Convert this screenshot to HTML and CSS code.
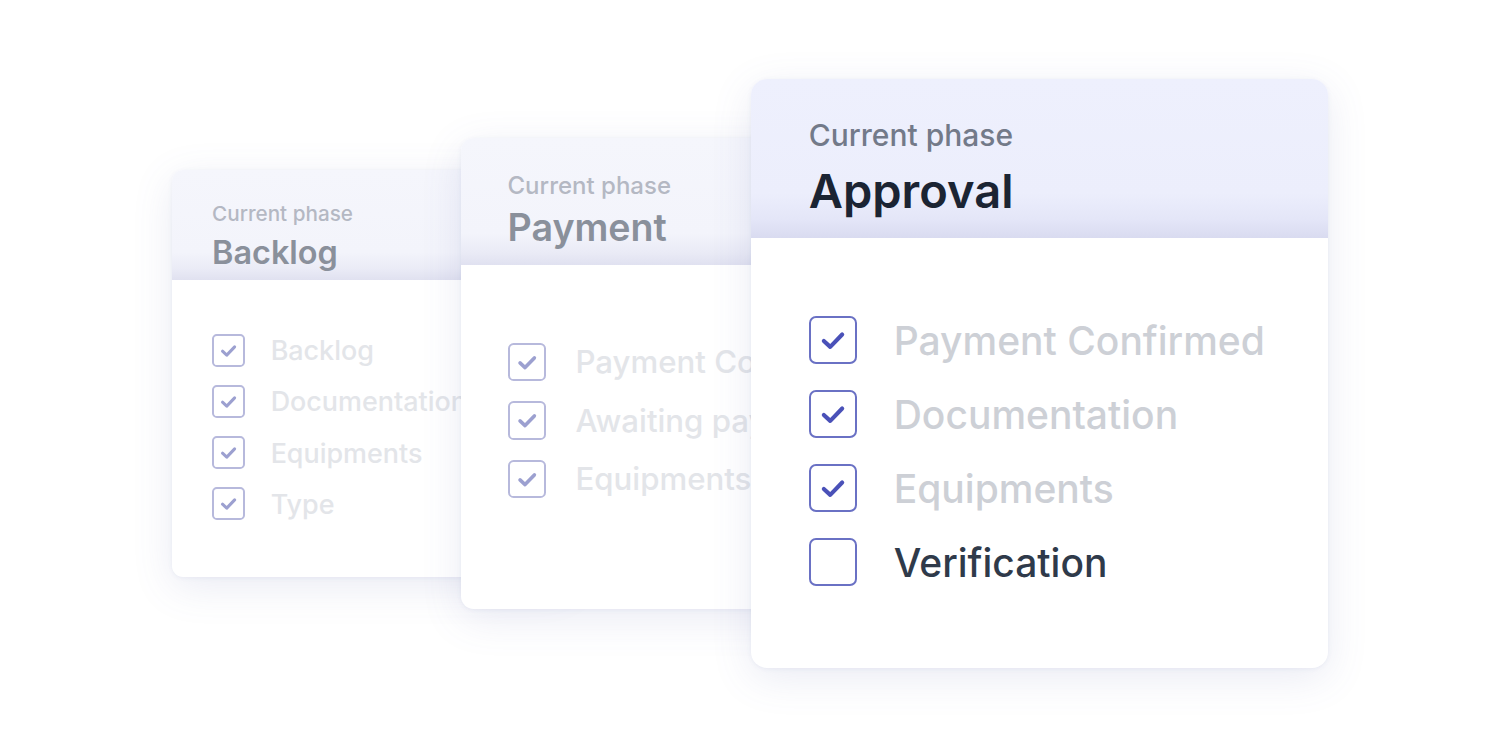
FILE: index.html
```html
<!DOCTYPE html>
<html lang="en">
<head>
  <meta charset="UTF-8" />
  <title>Phases</title>
  <link rel="stylesheet" href="styles.css">
</head>
<body>
  <div class="stage">
    <div class="card card-back card-first">
      <div class="card-head">
        <div class="phase-label">Current phase</div>
        <div class="phase-name">Backlog</div>
      </div>
      <div class="card-body">
        <div class="item done"><span class="box"><svg viewBox="0 0 48 48"><path d="M14 25 L21 31.5 L34 18"/></svg></span><span class="label">Backlog</span></div>
        <div class="item done"><span class="box"><svg viewBox="0 0 48 48"><path d="M14 25 L21 31.5 L34 18"/></svg></span><span class="label">Documentation</span></div>
        <div class="item done"><span class="box"><svg viewBox="0 0 48 48"><path d="M14 25 L21 31.5 L34 18"/></svg></span><span class="label">Equipments</span></div>
        <div class="item done"><span class="box"><svg viewBox="0 0 48 48"><path d="M14 25 L21 31.5 L34 18"/></svg></span><span class="label">Type</span></div>
      </div>
    </div>

    <div class="card card-back card-second">
      <div class="card-head">
        <div class="phase-label">Current phase</div>
        <div class="phase-name">Payment</div>
      </div>
      <div class="card-body">
        <div class="item done"><span class="box"><svg viewBox="0 0 48 48"><path d="M14 25 L21 31.5 L34 18"/></svg></span><span class="label">Payment Confirmed</span></div>
        <div class="item done"><span class="box"><svg viewBox="0 0 48 48"><path d="M14 25 L21 31.5 L34 18"/></svg></span><span class="label">Awaiting payment</span></div>
        <div class="item done"><span class="box"><svg viewBox="0 0 48 48"><path d="M14 25 L21 31.5 L34 18"/></svg></span><span class="label">Equipments</span></div>
      </div>
    </div>

    <div class="card card-front">
      <div class="card-head">
        <div class="phase-label">Current phase</div>
        <div class="phase-name">Approval</div>
      </div>
      <div class="card-body">
        <div class="item done"><span class="box"><svg viewBox="0 0 48 48"><path d="M14 25 L21 31.5 L34 18"/></svg></span><span class="label">Payment Confirmed</span></div>
        <div class="item done"><span class="box"><svg viewBox="0 0 48 48"><path d="M14 25 L21 31.5 L34 18"/></svg></span><span class="label">Documentation</span></div>
        <div class="item done"><span class="box"><svg viewBox="0 0 48 48"><path d="M14 25 L21 31.5 L34 18"/></svg></span><span class="label">Equipments</span></div>
        <div class="item"><span class="box"></span><span class="label">Verification</span></div>
      </div>
    </div>
  </div>
</body>
</html>
```

FILE: styles.css
```css
body {
  margin: 0;
  background-color: #fff;
  font-family: Inter, 'Noto Sans', sans-serif;
}
.stage {
  display: flex;
  align-items: center;
  height: 750px;
  padding-left: 172px;
  padding-bottom: 3px;
  box-sizing: border-box;
}
/* every size is scaled by --s so the back cards are smaller copies */
.card {
  --s: 1;
  flex: none;
  position: relative;
  width: calc(var(--s) * 577px);
  height: calc(var(--s) * 589px);
  border-radius: calc(var(--s) * 16px);
  background-color: #fff;
  overflow: hidden;
  box-shadow: 0 10px 40px rgba(95, 100, 170, 0.13), 0 1px 4px rgba(95, 100, 170, 0.08);
}
.card-first {
  --s: 0.69;
  margin-right: -109px;
}
.card-second {
  --s: 0.8;
  margin-right: -172px;
}
.card-head {
  height: calc(var(--s) * 159px);
  box-sizing: border-box;
  padding: calc(var(--s) * 38px) 0 0 calc(var(--s) * 58px);
  background: linear-gradient(#eef0fd 0%, #eceefc 72%, #e4e6f8 88%, #d9dbf0 100%);
}
.card-first .card-head {
  padding-top: calc(var(--s) * 46px);
}
.card-second .card-head {
  padding-top: calc(var(--s) * 42px);
}
.phase-label {
  font-size: calc(var(--s) * 30px);
  line-height: 1.2;
  font-weight: 500;
  color: #737a89;
}
.phase-name {
  margin-top: calc(var(--s) * 10px);
  font-size: calc(var(--s) * 47px);
  line-height: 1.2;
  font-weight: 600;
  color: #1b2433;
}
.card-second .phase-name {
  margin-top: calc(var(--s) * 6px);
}
.card-body {
  display: flex;
  flex-direction: column;
  gap: calc(var(--s) * 26px);
  padding: calc(var(--s) * 78px) 0 0 calc(var(--s) * 58px);
}
.card-second .card-body {
  padding-top: 78px;
  gap: 20px;
}
.card-first .card-body {
  gap: 18px;
}
.item {
  display: flex;
  align-items: center;
  gap: calc(var(--s) * 37px);
}
.box {
  width: calc(var(--s) * 48px);
  height: calc(var(--s) * 48px);
  box-sizing: border-box;
  border: 2px solid #6a71c4;
  border-radius: calc(var(--s) * 7px);
  display: flex;
}
.box svg {
  width: 100%;
  height: 100%;
  fill: none;
  stroke: #4a51b8;
  stroke-width: 4.5;
  stroke-linecap: round;
  stroke-linejoin: round;
}
.label {
  font-size: calc(var(--s) * 39px);
  font-weight: 500;
  color: #2f3a4a;
  white-space: nowrap;
}
.done .label {
  color: #cdd0d6;
}
/* faded cards behind the current one */
.card-back .card-head {
  background: linear-gradient(#f5f6fc 0%, #f3f4fb 75%, #eaebf6 90%, #e0e1f0 100%);
}
.card-back .phase-label {
  color: #b4b8c3;
}
.card-back .phase-name {
  color: #8a909b;
}
.card-back .box {
  border-color: #b7b9dc;
}
.card-back .box svg {
  stroke: #9ca0d0;
  stroke-width: 5;
}
.card-back .done .label {
  color: #e3e5e9;
}
```
